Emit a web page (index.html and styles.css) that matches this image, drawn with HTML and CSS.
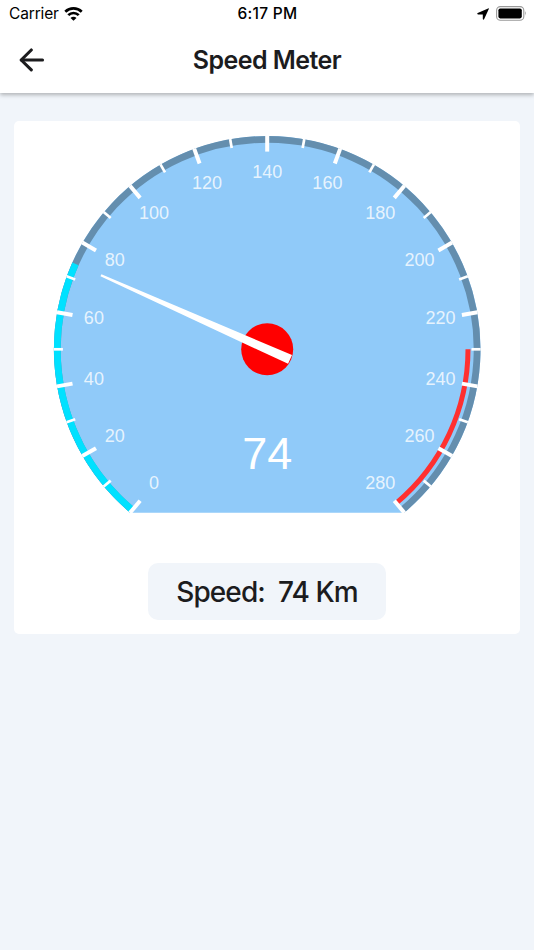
FILE: index.html
```html
<!DOCTYPE html>
<html lang="en">
<head>
    <meta charset="UTF-8">
    <title>Speed Meter</title>
    <link rel="stylesheet" href="styles.css">
</head>
<body>
    <header class="header">
        <div class="status-bar">
            <div class="status-left">
                <span class="carrier">Carrier</span>
                <svg class="wifi" width="19" height="14" viewBox="0 0 20 15" fill="none" stroke="#000" stroke-width="2.9">
                    <path d="M1.2 5.1a12.6 12.6 0 0 1 17.6 0"></path>
                    <path d="M4.4 8.7a8 8 0 0 1 11.2 0"></path>
                    <path d="M10 14.7L6.8 11.7a4.5 4.5 0 0 1 6.4 0Z" fill="#000" stroke="none"></path>
                </svg>
            </div>
            <span class="time">6:17 PM</span>
            <div class="status-right">
                <svg width="12" height="12" viewBox="0 0 12 12">
                    <path d="M11.1 0.4Q12.2 0 11.8 1.1L7.2 11Q6.3 12.4 5.8 10.9V6.4H1Q-0.5 6 0.7 5.1Z"></path>
                </svg>
                <svg width="31" height="15" viewBox="0 0 31 15">
                    <rect x="0.6" y="0.6" width="27.2" height="13.6" rx="3.8" fill="none" stroke="#999" stroke-width="1.1"></rect>
                    <rect x="2.4" y="2.4" width="23.4" height="10" rx="1.8"></rect>
                    <path d="M29.2 5.1q1.8 2.3 0 4.6Z" fill="#999"></path>
                </svg>
            </div>
        </div>
        <div class="nav">
            <button class="back" title="Back">
                <svg width="26" height="24" viewBox="0 0 26 24" fill="none" stroke="#1c1c1e" stroke-width="3.1" stroke-linecap="round" stroke-linejoin="round">
                    <path d="M12.3 2L2.2 12l10.1 9.8"></path>
                    <path d="M2.5 12H23.5"></path>
                </svg>
            </button>
            <h1 class="title">Speed Meter</h1>
        </div>
    </header>

    <main class="card">
        <svg id="gauge" width="428" height="379" viewBox="-214.2 -214.3 428 379"></svg>
        <div class="speed"><span>Speed:</span><span id="speed-value"></span></div>
    </main>

    <script>
        const speed = 74;
        const maxSpeed = 280;
        const radius = 213.3;
        const gauge = document.getElementById('gauge');

        // One km/h is one degree, with the middle of the scale at the top
        function point(value, r) {
            const angle = (value - maxSpeed / 2) * Math.PI / 180;
            return [r * Math.sin(angle), -r * Math.cos(angle)];
        }

        function add(tag, className, attrs) {
            const el = document.createElementNS('http://www.w3.org/2000/svg', tag);
            el.setAttribute('class', className);
            for (const key in attrs) el.setAttribute(key, attrs[key]);
            gauge.appendChild(el);
            return el;
        }

        function arc(from, to, r, className) {
            const large = to - from > 180 ? 1 : 0;
            add('path', className, {
                d: `M${point(from, r)} A${r} ${r} 0 ${large} 1 ${point(to, r)}`
            });
        }

        arc(0, maxSpeed, radius, 'face');
        arc(0, maxSpeed, radius - 3.4, 'ring');
        arc(0, speed, radius - 3.4, 'ring progress');
        arc(230, maxSpeed, 200.8, 'danger');

        for (let v = 0; v <= maxSpeed; v += 10) {
            const major = v % 20 === 0;
            const [x1, y1] = point(v, radius + 0.2);
            const [x2, y2] = point(v, radius - (major ? 15.6 : 9));
            add('line', major ? 'tick major' : 'tick', { x1, y1, x2, y2 });
            if (major) {
                const [x, y] = point(v, 176);
                add('text', 'label', { x, y: y + 4.9 }).textContent = v;
            }
        }

        add('circle', 'hub', { cx: 0, cy: 0, r: 26 });
        add('path', 'needle', {
            d: 'M-1.2 -182 L1.2 -182 L4.8 25 L-4.8 25 Z',
            transform: `rotate(${speed - maxSpeed / 2})`
        });
        add('text', 'value', { x: 0, y: 120 }).textContent = speed;

        document.getElementById('speed-value').textContent = `${speed} Km`;
    </script>
</body>
</html>
```

FILE: styles.css
```css
body {
    margin: 0;
    min-height: 100vh;
    background: #f1f5fa;
    color: #1c1c1e;
    font-family: Inter, "Liberation Sans", sans-serif;
}

.header {
    height: 93px;
    background: #fff;
    box-shadow: 0 2px 4px rgba(0, 0, 0, 0.27);
}

.status-bar {
    display: grid;
    grid-template-columns: 1fr auto 1fr;
    align-items: center;
    height: 27px;
    padding: 0 8px 0 9px;
    color: #000;
    font-size: 15.5px;
}

.status-left,
.status-right {
    display: flex;
    align-items: center;
}

.status-left {
    gap: 5px;
}

.carrier {
    letter-spacing: -0.15px;
}

.status-right {
    justify-content: flex-end;
    gap: 7px;
}

.status-right svg {
    position: relative;
    left: 1px;
}

.time {
    font-weight: 500;
    letter-spacing: 0.3px;
}

.nav {
    display: grid;
    grid-template-columns: 60px 1fr 60px;
    align-items: center;
    height: 66px;
}

.back {
    display: flex;
    padding: 0 0 0 19px;
    border: none;
    background: none;
}

.title {
    margin: 0;
    text-align: center;
    font-size: 25px;
    font-weight: 600;
    letter-spacing: -0.55px;
}

.card {
    display: flex;
    flex-direction: column;
    align-items: center;
    height: 499px;
    margin: 28px 14px 0;
    padding-top: 14px;
    border-radius: 5px;
    background: #fff;
}

#gauge {
    display: block;
    flex: none;
}

.face {
    fill: #90caf9;
}

.ring {
    fill: none;
    stroke: #648eae;
    stroke-width: 6.8;
}

.progress {
    stroke: #00e1ff;
}

.danger {
    fill: none;
    stroke: #ff3030;
    stroke-width: 5;
}

.tick {
    stroke: #fff;
    stroke-width: 2.7;
}

.major {
    stroke-width: 4;
}

.label,
.value {
    fill: #fff;
    font-family: "Liberation Sans", Arial, sans-serif;
    text-anchor: middle;
}

.label {
    font-size: 18px;
    fill-opacity: 0.8;
}

.value {
    font-size: 45px;
}

.hub {
    fill: #f00;
}

.needle {
    fill: #fff;
}

.speed {
    display: flex;
    align-items: center;
    justify-content: center;
    gap: 13px;
    width: 238px;
    height: 57px;
    margin-top: 49px;
    border-radius: 10px;
    background: #f1f5fa;
    font-size: 28px;
    font-weight: 500;
    letter-spacing: -0.9px;
}
```
